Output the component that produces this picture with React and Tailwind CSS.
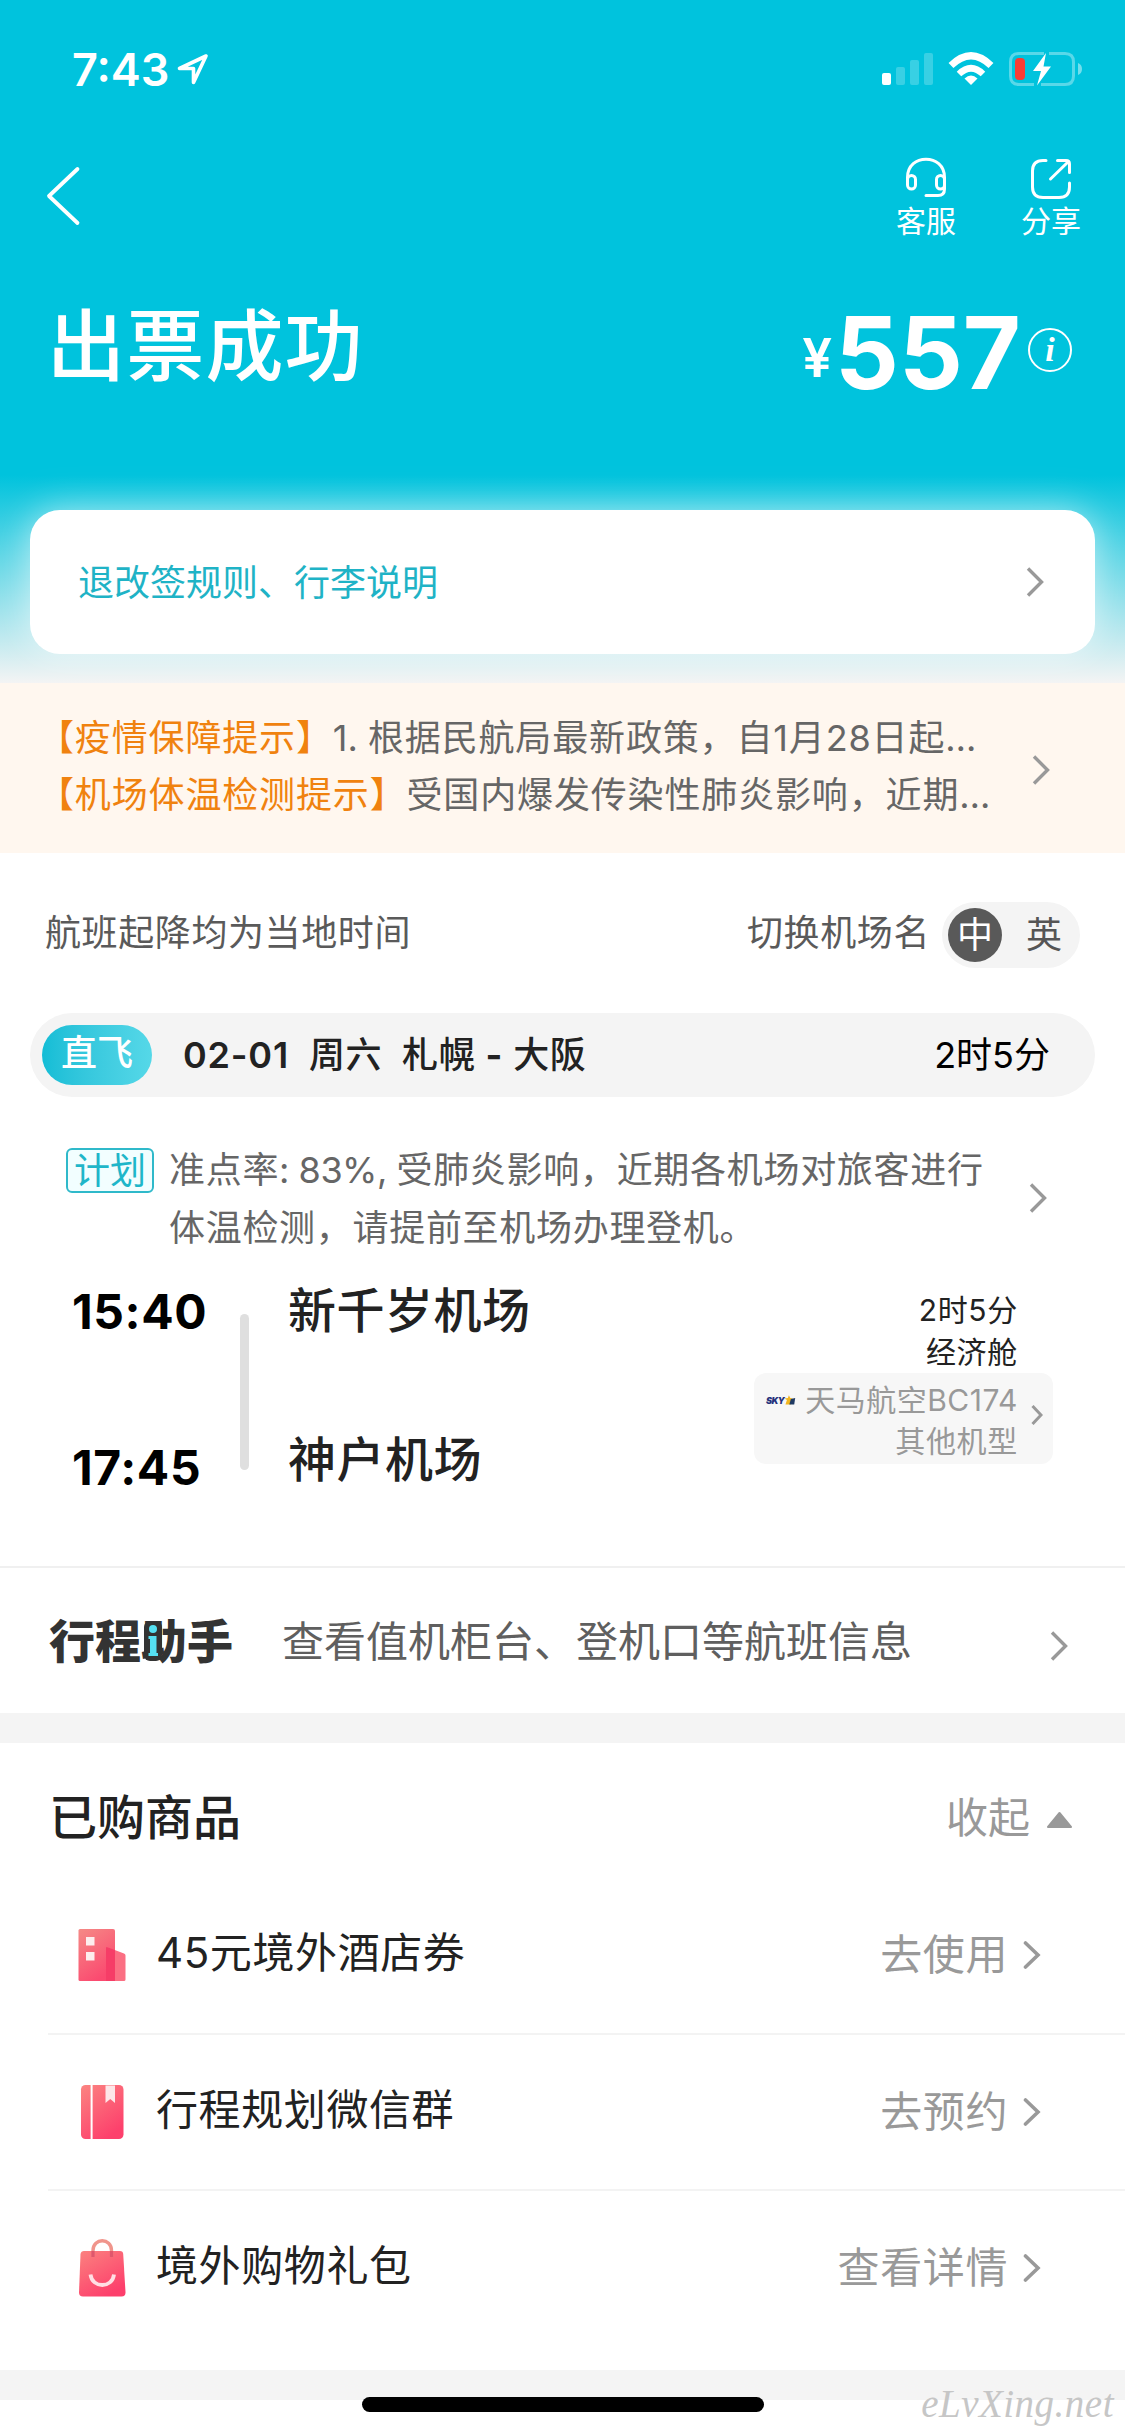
/**
 * TicketSuccess - Order result page shown after a flight ticket is issued
 */

import { useState } from 'react';

const GOODS = [
  { id: 'hotel', name: '45元境外酒店券', action: '去使用', Icon: HotelIcon },
  { id: 'group', name: '行程规划微信群', action: '去预约', Icon: BookIcon },
  { id: 'gift', name: '境外购物礼包', action: '查看详情', Icon: BagIcon },
];

function Chevron({ className }) {
  return (
    <svg className={className} viewBox="0 0 18 30" fill="none" stroke="currentColor" strokeWidth="3.4">
      <path d="M2 1.5L15.5 15L2 28.5" />
    </svg>
  );
}

function HotelIcon() {
  return (
    <svg className="w-12 h-14" viewBox="0 0 48 56">
      <defs>
        <linearGradient id="hotel" x1="0" y1="0" x2="0.5" y2="1">
          <stop offset="0" stopColor="#f58a86" />
          <stop offset="1" stopColor="#fb4a70" />
        </linearGradient>
      </defs>
      <path d="M2 2H35Q37 2 37 4V54H2Q0.500 54 0.500 52.500V3.500Q0.500 2 2 2Z" fill="url(#hotel)" />
      <path d="M28 21Q28 19.500 29.500 20.200L46 26.500Q47.500 27 47.500 28.500V52.500Q47.500 54 46 54H28Z" fill="#fb6f83" />
      <path d="M28 21Q28 19.500 29.500 20.200L37 23V54H28Z" fill="#f63d67" />
      <rect x="8" y="10" width="8.500" height="8.500" fill="#fdeeee" />
      <rect x="8" y="25" width="8.500" height="8.500" fill="#fdeeee" />
    </svg>
  );
}

function BookIcon() {
  return (
    <svg className="w-12 h-14" viewBox="0 0 48 56">
      <defs>
        <linearGradient id="book" x1="0" y1="0" x2="0.6" y2="1">
          <stop offset="0" stopColor="#fb8481" />
          <stop offset="1" stopColor="#fd406c" />
        </linearGradient>
      </defs>
      <rect x="3" y="1" width="42.500" height="54" rx="4.500" fill="url(#book)" />
      <rect x="12.600" y="1" width="2" height="54" fill="#fff" />
      <path d="M27.500 1.500H37V19L32.250 15L27.500 19Z" fill="#fde6e8" />
    </svg>
  );
}

function BagIcon() {
  return (
    <svg className="w-12 h-[58px]" viewBox="0 0 48 58">
      <defs>
        <linearGradient id="bag" x1="0" y1="0" x2="0.6" y2="1">
          <stop offset="0" stopColor="#fb827f" />
          <stop offset="1" stopColor="#fd3f6c" />
        </linearGradient>
      </defs>
      <path d="M6 12H42Q45 12 45.200 15L47.500 53.500Q47.500 57.500 43.500 57.500H5Q1 57.500 1 53.500L2.500 15Q3 12 6 12Z" fill="url(#bag)" />
      <path d="M15 18V11.500C15 -1.500 33.500 -1.500 33.500 11.500V18" fill="none" stroke="#f0958c" strokeWidth="3.400" />
      <path d="M15 12V18M33.500 12V18" stroke="#e0566c" strokeWidth="3.400" />
      <path d="M12.500 35.500C14 49.500 34.500 49.500 36 35.500" fill="none" stroke="#ffdfe4" strokeWidth="3.800" />
    </svg>
  );
}

function StatusBar() {
  return (
    <div className="h-[138px] pl-[72px] pr-[41px] flex items-center justify-between text-white">
      <div className="flex items-center">
        <span className="text-[45px] leading-[45px] font-semibold">7:43</span>
        <svg className="ml-2 w-8 h-8" viewBox="0 0 32 32" fill="none" stroke="currentColor" strokeWidth="3.6" strokeLinejoin="round">
          <path d="M29 3L2.500 15.500H16.500V29.500Z" />
        </svg>
      </div>
      <svg className="w-[204px] h-[38px]" viewBox="880 50 204 38">
        {/* Signal */}
        <rect x="882" y="73" width="9" height="12" rx="2" fill="#fff" />
        <g fill="#fff" fillOpacity="0.22">
          <rect x="896" y="67" width="9" height="18" rx="2" />
          <rect x="910" y="60" width="9" height="25" rx="2" />
          <rect x="924" y="53" width="9" height="32" rx="2" />
        </g>
        {/* Wifi */}
        <g fill="none" stroke="#fff">
          <path d="M951 65.500Q971 46 991 65.500" strokeWidth="7" />
          <path d="M959 74Q971 62.500 983 74" strokeWidth="6.500" />
        </g>
        <path d="M971 85L964.500 78.500Q971 72.500 977.500 78.500Z" fill="#fff" />
        {/* Battery */}
        <g fill="none" stroke="#fff" strokeOpacity="0.35" strokeWidth="3">
          <path d="M1044 53.500H1019Q1010.500 53.500 1010.500 62V76Q1010.500 84.500 1019 84.500H1034" />
          <path d="M1049 53.500H1065Q1073.500 53.500 1073.500 62V76Q1073.500 84.500 1065 84.500H1041" />
        </g>
        <path d="M1078 63V75Q1082 73.500 1082 69Q1082 64.500 1078 63Z" fill="#fff" fillOpacity="0.45" />
        <rect x="1015" y="58" width="10" height="22" rx="4" fill="#fb3b33" />
        <path d="M1046 53L1033 71H1041L1037 85.500L1051 66.500H1043.500Z" fill="#fff" />
      </svg>
    </div>
  );
}

function NavBar() {
  return (
    <div className="h-28 pl-[45px] pr-[44px] flex justify-between text-white">
      <svg className="mt-[27px] w-9 h-[62px]" viewBox="0 0 36 62" fill="none" stroke="currentColor" strokeWidth="3.8" strokeLinecap="round" strokeLinejoin="round">
        <path d="M32.500 4L4 31L32.500 58" />
      </svg>
      <div className="pt-[19px] flex gap-[65px]">
        <button className="flex flex-col items-center">
          <svg className="w-[42px] h-[42px]" viewBox="0 0 42 42" fill="none" stroke="currentColor" strokeWidth="3" strokeLinecap="round">
            <path d="M2.500 24V20.500C2.500 -4 39.500 -4 39.500 20.500V32Q39.500 38.500 33 38.500H21" />
            <rect x="2.500" y="18.500" width="8" height="13.500" rx="4" />
            <rect x="31.500" y="18.500" width="8" height="13.500" rx="4" />
          </svg>
          <span className="text-[30px] leading-[44px]">客服</span>
        </button>
        <button className="flex flex-col items-center">
          <svg className="w-[42px] h-[42px]" viewBox="0 0 42 42" fill="none" stroke="currentColor" strokeWidth="3" strokeLinecap="round" strokeLinejoin="round">
            <path d="M16 3.500H13Q2.500 3.500 2.500 14V30Q2.500 40.500 13 40.500H29Q39.500 40.500 39.500 30V26" />
            <path d="M27.500 3.500H36Q39.500 3.500 39.500 7V15.500M38.500 4.500L20.500 22" />
          </svg>
          <span className="text-[30px] leading-[44px]">分享</span>
        </button>
      </div>
    </div>
  );
}

function TitleRow() {
  return (
    <div className="h-[190px] pl-[47px] pr-[53px] flex items-center justify-between text-white">
      <h1 className="mt-1 text-[78px] leading-none font-medium tracking-[1.2px]">出票成功</h1>
      <div className="flex items-center">
        <span className="mt-[27px] mr-[3px] text-[53px] leading-none font-semibold">¥</span>
        <span className="mt-[15px] text-[100px] leading-none font-bold">557</span>
        <span className="mt-2.5 ml-[7px] w-11 h-11 flex items-center justify-center rounded-full border-2 border-white font-['Liberation_Serif',serif] italic font-bold text-[34px] leading-none">
          i
        </span>
      </div>
    </div>
  );
}

function Notice() {
  return (
    <div className="h-[170px] pt-[27px] pl-[38px] pr-[75px] flex justify-between bg-[#fff7ef] text-[36px] leading-[57px] tracking-[0.85px] text-[#666]">
      <div className="whitespace-nowrap">
        <p>
          <span className="text-[#f0820f]">【疫情保障提示】</span>
          <span className="tracking-[0px]">1. </span>
          根据民航局最新政策，自1月28日起<span className="tracking-[2px]">…</span>
        </p>
        <p>
          <span className="text-[#f0820f]">【机场体温检测提示】</span>
          受国内爆发传染性肺炎影响，近期<span className="tracking-[2px]">…</span>
        </p>
      </div>
      <Chevron className="mt-[45px] w-[18px] h-[30px] text-[#999]" />
    </div>
  );
}

function NameSwitch() {
  const [lang, setLang] = useState('zh');
  const on = 'w-[54px] h-[54px] rounded-full bg-[#595959] text-white';
  const off = 'w-[54px] h-[54px] rounded-full text-[#555]';

  return (
    <div className="mt-1 w-[138px] h-[66px] pl-1.5 pr-[9px] flex items-center justify-between rounded-full bg-[#f4f4f4] leading-[54px]">
      <button className={lang === 'zh' ? on : off} onClick={() => setLang('zh')}>中</button>
      <button className={lang === 'en' ? on : off} onClick={() => setLang('en')}>英</button>
    </div>
  );
}

function Flight() {
  return (
    <section>
      <div className="h-40 pl-[45px] pr-[45px] flex items-center justify-between text-[36px] leading-none text-[#5a5a5a]">
        <span className="tracking-[0.6px]">航班起降均为当地时间</span>
        <div className="flex items-center gap-[12px]">
          <span className="tracking-[0.6px]">切换机场名</span>
          <NameSwitch />
        </div>
      </div>

      {/* Segment title */}
      <div className="mx-[30px] h-[84px] pl-3 pr-[45px] flex items-center rounded-full bg-[#f4f4f4] text-[36px] leading-none">
        <span className="w-[110px] h-[60px] pb-1 flex items-center justify-center rounded-full bg-gradient-to-r from-[#12bdd6] to-[#55d8e8] text-white font-medium">
          直飞
        </span>
        <span className="ml-[31px] font-semibold tracking-[0.8px] text-[#222]">02-01</span>
        <span className="ml-5 font-medium tracking-[0.6px] text-[#222]">周六</span>
        <span className="ml-5 font-medium tracking-[0.6px] text-[#222]">札幌 <b className="font-bold">-</b> 大阪</span>
        <span className="ml-auto text-black">2时5分</span>
      </div>

      {/* Punctuality tip */}
      <div className="mt-11 pl-[66px] pr-[78px] flex items-start text-[36px] leading-[58px] text-[#666]">
        <span className="mt-[7px] w-[88px] h-[45px] flex items-center justify-center rounded-md border-2 border-[#2fb9ca] bg-[#f2feff] text-[#1fb6c9] leading-none">
          计划
        </span>
        <p className="ml-[15px] whitespace-nowrap tracking-[0.7px]">
          准点率<span className="tracking-[-0.5px]">: 83%, </span>受肺炎影响，近期各机场对旅客进行<br />
          体温检测，请提前至机场办理登机。
        </p>
        <Chevron className="mt-[42px] ml-auto w-[18px] h-[30px] text-[#999]" />
      </div>

      {/* Times and airports */}
      <div className="h-[309px] pl-[72px] pr-[72px] flex items-start">
        <div className="mt-[31px] w-[168px] flex flex-col gap-[108px] text-[48px] leading-[48px] font-bold tracking-[0.6px] text-black">
          <span>15:40</span>
          <span>17:45</span>
        </div>
        <div className="mt-[57px] w-[9px] h-[156px] rounded-full bg-[#dfdfdf]" />
        <div className="mt-[30px] ml-[39px] flex flex-col gap-[101px] text-[48px] leading-[48px] font-medium tracking-[0.5px] text-[#222]">
          <span>新千岁机场</span>
          <span>神户机场</span>
        </div>
        <div className="ml-auto pt-8 w-[299px] text-right text-[30px] leading-[42px] tracking-[0.7px] text-[#222]">
          <p className="pr-[35px]">2时5分</p>
          <p className="pr-[35px]">经济舱</p>
          <div className="h-[91px] pt-[7px] pl-3 pr-[10px] flex justify-between rounded-xl bg-[#f7f7f7] leading-[41px] text-[#999]">
            <div className="mt-[15px] w-[30px] h-2.5 flex items-center">
              <span className="text-[9px] leading-none font-black italic tracking-[-0.5px] text-[#26327c]">SKY</span>
              <svg className="w-3 h-2.5" viewBox="0 0 12 10">
                <path d="M5 0L6.500 3L9 3.500L7 6V9.500H1.500L3 5L0.500 3.500L4 3Z" fill="#f3b61f" />
                <path d="M5.500 9.500L7 4L11.500 3L10.500 9.500Z" fill="#1f3a63" />
              </svg>
            </div>
            <div className="ml-auto mr-[13px] whitespace-nowrap">
              <p className="tracking-[0.5px]">天马航空BC174</p>
              <p>其他机型</p>
            </div>
            <svg className="mt-[25px] w-3 h-5" viewBox="0 0 12 20" fill="none" stroke="#999" strokeWidth="3">
              <path d="M1.500 1L10 10L1.500 19" />
            </svg>
          </div>
        </div>
      </div>
    </section>
  );
}

function Assistant() {
  return (
    <div className="h-[147px] border-t-2 border-[#f0f0f0] pl-[49px] pr-[57px] flex items-center">
      <div className="relative w-[184px] text-[46px] leading-[46px] font-black text-[#333]">
        <span className="whitespace-nowrap">行程助手</span>
        {/* Highlight inside the wordmark */}
        <svg className="absolute left-[95px] top-[3px] w-[18px] h-10" viewBox="0 0 18 40">
          <rect width="18" height="40" rx="6" fill="#333" />
          <circle cx="9" cy="8" r="4" fill="#55e0f2" />
          <path d="M4.500 15H12.500V32H14V35H4.500V32H6V18H4.500Z" fill="#55e0f2" />
        </svg>
      </div>
      <span className="mt-[3px] ml-[49px] text-[42px] leading-none text-[#5f5f5f]">查看值机柜台、登机口等航班信息</span>
      <Chevron className="ml-auto mt-2.5 w-[18px] h-[30px] text-[#999]" />
    </div>
  );
}

function Goods() {
  return (
    <section>
      <div className="h-[134px] pt-[51px] pl-[49px] pr-[52px] flex items-start justify-between leading-[48px]">
        <h2 className="text-[48px] font-medium text-[#222]">已购商品</h2>
        <div className="flex items-center text-[42px] text-[#999]">
          <span>收起</span>
          <svg className="ml-4 mt-1 w-[27px] h-[18px]" viewBox="0 0 27 18">
            <path d="M13.500 2L25 16H2Z" fill="#999" stroke="#999" strokeWidth="2" strokeLinejoin="round" />
          </svg>
        </div>
      </div>
      <div className="pl-12">
        {GOODS.map(({ id, name, action, Icon }, i) => (
          <div
            key={id}
            className={(i > 0 ? 'border-t-2 border-[#f3f3f3] ' : '') + 'h-[156px] pl-[30px] pr-[84px] flex items-center text-[42px] leading-none'}
          >
            <Icon />
            <span className="ml-[30px] pb-[5px] tracking-[0.6px] text-[#222]">{name}</span>
            <span className="ml-auto tracking-[0.6px] text-[#999]">{action}</span>
            <svg className="ml-[15px] w-[18px] h-[30px] text-[#999]" viewBox="0 0 18 30" fill="none" stroke="currentColor" strokeWidth="3.6" strokeLinecap="round">
              <path d="M2.500 3L15 15L2.500 27" />
            </svg>
          </div>
        ))}
      </div>
    </section>
  );
}

export default function App() {
  return (
    <div className="relative w-[1125px] h-[2436px] overflow-hidden bg-white font-['Inter','Noto_Sans_CJK_SC',sans-serif]">
      <header className="h-[683px] bg-[linear-gradient(to_bottom,#00c3dd_0px,#00c3dd_475px,#f4f4f4_683px)]">
        <StatusBar />
        <NavBar />
        <TitleRow />
        <div className="mx-[30px] mt-[70px] h-36 pl-[48px] pr-[51px] flex items-center justify-between rounded-[30px] bg-white shadow-[0_0_36px_rgba(255,255,255,0.6)]">
          <span className="mt-0.5 text-[36px] leading-none text-[#1fb3c6]">退改签规则、行李说明</span>
          <Chevron className="w-[18px] h-[30px] text-[#999]" />
        </div>
      </header>

      <Notice />
      <Flight />
      <Assistant />
      <div className="h-[30px] bg-[#f4f4f4]" />
      <Goods />
      <div className="mt-[25px] h-[30px] bg-[#f4f4f4]" />

      {/* Home indicator */}
      <div className="absolute left-[362px] bottom-6 w-[402px] h-[15px] rounded-full bg-black" />
      <span className="absolute right-[11px] bottom-3 font-['Liberation_Serif',serif] italic text-[39px] leading-[40px] tracking-[0.5px] text-[#c6c6c6]">
        eLvXing.net
      </span>
    </div>
  );
}
